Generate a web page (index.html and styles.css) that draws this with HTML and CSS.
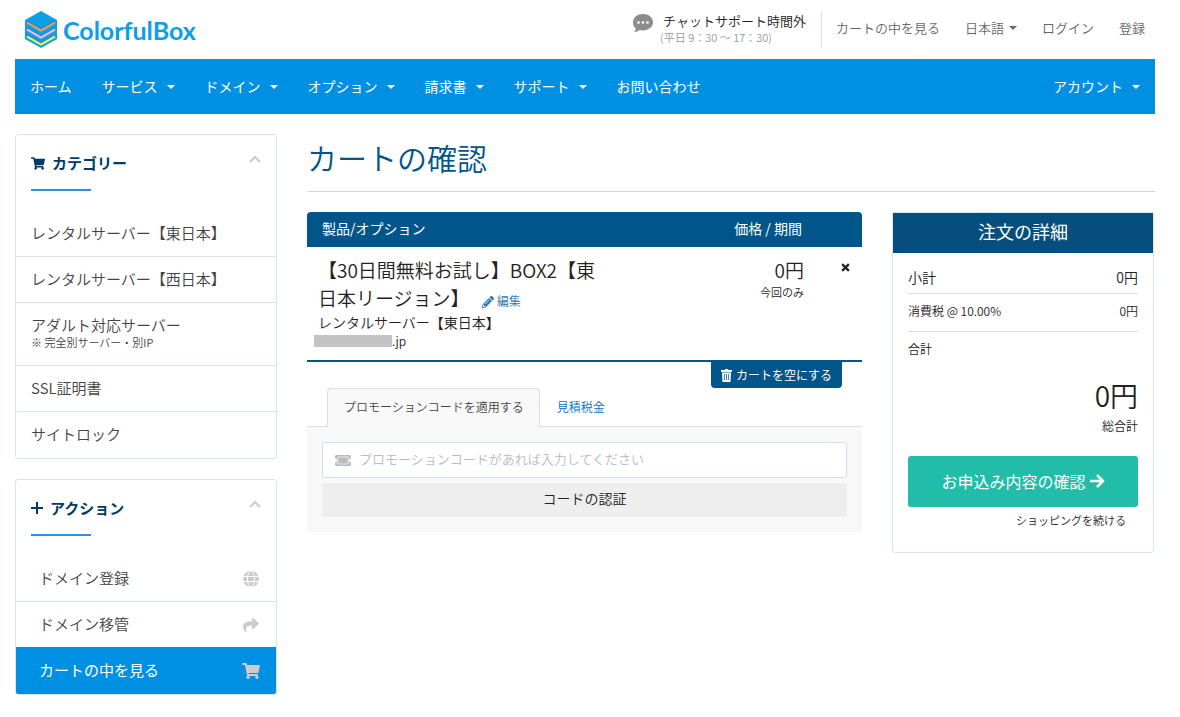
FILE: index.html
```html
<!DOCTYPE html>
<html lang="ja">
<head>
<meta charset="utf-8">
<meta name="viewport" content="width=device-width, initial-scale=1">
<title>カートの確認 - ColorfulBox</title>
<link rel="stylesheet" href="styles.css">
</head>
<body>
<svg class="sprite" aria-hidden="true">
  <symbol id="cart" viewBox="0 0 576 512"><path d="M528.12 301.319l47.273-208C578.806 78.301 567.391 64 551.99 64H159.208l-9.166-44.81C147.758 8.021 137.93 0 126.529 0H24C10.745 0 0 10.745 0 24v16c0 13.255 10.745 24 24 24h69.883l70.248 343.435C147.325 417.1 136 435.222 136 456c0 30.928 25.072 56 56 56s56-25.072 56-56c0-15.674-6.447-29.835-16.824-40h209.647C430.447 426.165 424 440.326 424 456c0 30.928 25.072 56 56 56s56-25.072 56-56c0-22.172-12.888-41.332-31.579-50.405l5.517-24.276c3.413-15.018-8.002-29.319-23.403-29.319H218.117l-6.545-32h293.145c11.206 0 20.92-7.754 23.403-18.681z"/></symbol>
  <symbol id="chevron" viewBox="0 0 12 8"><path d="M1 7l5-5 5 5" fill="none" stroke="currentColor" stroke-width="2"/></symbol>
</svg>
<div class="page">
  <header class="topbar">
    <a class="logo" href="#">
      <svg class="logo-mark" viewBox="0 0 32 37" aria-hidden="true">
        <path fill="#0aa0e6" d="M16 0l16 9v19l-16 9L0 28V9z"/>
        <path fill="none" stroke="#0878b4" stroke-width="1" d="M2 10l14 8 14-8M2 17l14 8 14-8M2 24l14 8 14-8"/>
        <path fill="none" stroke="#f0965a" stroke-width="2.200" d="M2 11.500l14 8 14-8"/>
        <path fill="none" stroke="#f4b6dc" stroke-width="2.200" d="M2 18.500l14 8 14-8"/>
        <path fill="none" stroke="#eaf060" stroke-width="2.200" d="M2 25.500l14 8 14-8"/>
      </svg>
      <span>ColorfulBox</span>
    </a>
    <div class="chat">
      <svg class="chat-icon" viewBox="0 0 20 19" aria-hidden="true"><path fill="#8c8c8c" d="M10 0c5.500 0 10 3.500 10 8.200s-4.500 8.200-10 8.200c-1.200 0-2.300-.1-3.300-.4C5.300 17.200 3.500 18 1 18c1-1 1.700-2.300 1.700-3.600C1 13 0 11 0 8.200 0 3.500 4.500 0 10 0z"/><g fill="#fff"><circle cx="5.500" cy="8.500" r="1.300"/><circle cx="10" cy="8.500" r="1.300"/><circle cx="14.500" cy="8.500" r="1.300"/></g></svg>
      <div><p class="chat-title">チャットサポート時間外</p><p class="chat-hours">(平日 9：30 〜 17：30)</p></div>
    </div>
    <nav class="toplinks">
      <a href="#">カートの中を見る</a>
      <a href="#">日本語<i class="caret"></i></a>
      <a href="#">ログイン</a>
      <a href="#">登録</a>
    </nav>
  </header>
  <nav class="mainnav">
    <a href="#">ホーム</a>
    <a href="#">サービス<i class="caret"></i></a>
    <a href="#">ドメイン<i class="caret"></i></a>
    <a href="#">オプション<i class="caret"></i></a>
    <a href="#">請求書<i class="caret"></i></a>
    <a href="#">サポート<i class="caret"></i></a>
    <a href="#">お問い合わせ</a>
    <a class="account" href="#">アカウント<i class="caret"></i></a>
  </nav>
  <div class="layout">
    <aside class="sidebar">
      <section class="panel">
        <header class="panel-head">
          <h2><svg class="head-icon" aria-hidden="true"><use href="#cart"/></svg>カテゴリー</h2>
          <button class="toggle" aria-label="カテゴリーを閉じる"><svg viewBox="0 0 12 8"><use href="#chevron"/></svg></button>
        </header>
        <ul class="links">
          <li><a href="#">レンタルサーバー【東日本】</a></li>
          <li><a href="#">レンタルサーバー【西日本】</a></li>
          <li><a href="#">アダルト対応サーバー<small>※ 完全別サーバー・別IP</small></a></li>
          <li><a href="#">SSL証明書</a></li>
          <li><a href="#">サイトロック</a></li>
        </ul>
      </section>
      <section class="panel">
        <header class="panel-head">
          <h2><svg class="plus-icon" viewBox="0 0 12 12" aria-hidden="true"><path d="M5 0h2v5h5v2H7v5H5V7H0V5h5z"/></svg>アクション</h2>
          <button class="toggle" aria-label="アクションを閉じる"><svg viewBox="0 0 12 8"><use href="#chevron"/></svg></button>
        </header>
        <ul class="links actions">
          <li><a href="#">ドメイン登録<svg class="row-icon" viewBox="0 0 16 16" aria-hidden="true"><circle cx="8" cy="8" r="8"/><g fill="none" stroke="#fff" stroke-width="1"><path d="M0 5.500h16M0 10.500h16"/><ellipse cx="8" cy="8" rx="3.500" ry="8"/></g></svg></a></li>
          <li><a href="#">ドメイン移管<svg class="row-icon" viewBox="0 0 512 512" aria-hidden="true"><path d="M503.691 189.836L327.687 37.851C312.281 24.546 288 35.347 288 56.015v80.053C127.371 137.907 0 170.100 0 322.326c0 61.441 39.581 122.309 83.333 154.132 13.653 9.931 33.111-2.533 28.077-18.631C66.066 312.814 132.917 274.316 288 272.085V360c0 20.700 24.300 31.453 39.687 18.164l176.004-152c11.071-9.562 11.086-26.753 0-36.328z"/></svg></a></li>
          <li class="active"><a href="#">カートの中を見る<svg class="row-icon" aria-hidden="true"><use href="#cart"/></svg></a></li>
        </ul>
      </section>
    </aside>
    <main class="main">
      <h1>カートの確認</h1>
      <div class="columns">
        <div class="cart">
          <table class="items">
            <thead><tr><th class="product" scope="col">製品/オプション</th><th class="price" scope="col">価格 / 期間</th><th class="remove"></th></tr></thead>
            <tbody><tr>
              <td class="product">
                <p class="name">【30日間無料お試し】BOX2【東日本リージョン】
                <a class="edit" href="#"><svg viewBox="0 0 512 512" aria-hidden="true"><path d="M498 142l-46 46c-5 5-13 5-17 0L324 77c-5-5-5-12 0-17l46-46c19-19 49-19 68 0l60 60c19 19 19 49 0 68zM284 97L22 360 0 484c-3 16 12 31 28 28l124-22 263-262c5-5 5-13 0-17L301 97c-4-5-12-5-17 0zM124 340c-5-6-5-14 0-20l154-154c6-5 14-5 20 0s5 14 0 20L144 340c-6 5-14 5-20 0zM88 424h48v36l-64 12-32-32 12-64h36z"/></svg>編集</a></p>
                <p class="group">レンタルサーバー【東日本】</p>
                <p class="domain"><span class="masked"></span>.jp</p>
              </td>
              <td class="price"><p class="amount">0円</p><p class="cycle">今回のみ</p></td>
              <td class="remove"><button aria-label="削除"><svg viewBox="0 0 8 8"><path d="M1 1l6 6M7 1L1 7" fill="none" stroke="currentColor" stroke-width="2"/></svg></button></td>
            </tr></tbody>
          </table>
          <button class="empty"><svg viewBox="0 0 11 13" aria-hidden="true"><path fill="currentColor" d="M0 1h3.500l.8-1h2.400l.8 1H11v2H0z"/><path fill="currentColor" d="M1 3.500h9L9.500 13h-8z"/><path stroke="#00558a" stroke-width=".7" d="M3.500 5v6M5.500 5v6M7.500 5v6"/></svg>カートを空にする</button>
          <div class="tabs">
            <button class="tab selected">プロモーションコードを適用する</button>
            <button class="tab">見積税金</button>
          </div>
          <form class="promo">
            <label class="field">
              <svg viewBox="0 0 16 11" aria-hidden="true"><path fill="#bbb" d="M1 0h14l1 1v2.500a2 2 0 000 4V10l-1 1H1l-1-1V7.500a2 2 0 000-4V1z"/><path fill="#bbb" stroke="#fff" stroke-width=".7" d="M2.800 2h10.400v7H2.800z"/></svg>
              <input type="text" aria-label="プロモーションコード" placeholder="プロモーションコードがあれば入力してください">
            </label>
            <button class="verify" type="button">コードの認証</button>
          </form>
        </div>
        <section class="summary">
          <h2>注文の詳細</h2>
          <div class="summary-body">
            <dl>
              <div class="line subtotal"><dt>小計</dt><dd>0円</dd></div>
              <div class="line tax"><dt>消費税 @ 10.00%</dt><dd>0円</dd></div>
              <div class="line recurring"><dt>合計</dt><dd></dd></div>
            </dl>
            <p class="total">0円</p>
            <p class="total-label">総合計</p>
            <button class="checkout">お申込み内容の確認<svg viewBox="0 0 15 14" aria-hidden="true"><path d="M0 7h13M7 1l6 6-6 6" fill="none" stroke="currentColor" stroke-width="2.500"/></svg></button>
            <a class="continue" href="#">ショッピングを続ける</a>
          </div>
        </section>
      </div>
    </main>
  </div>
</div>
</body>
</html>
```
FILE: styles.css
```css
* { box-sizing: border-box; }
body {
  margin: 0;
  background: #fff;
  color: #222;
  font-family: "Noto Sans CJK JP", sans-serif;
  font-size: 14px;
  font-weight: 350;
}
h1, h2, p, ul, dl, dd { margin: 0; padding: 0; }
ul { list-style: none; }
a { color: inherit; text-decoration: none; }
button, input { font: inherit; color: inherit; border: 0; background: none; padding: 0; margin: 0; }
button { cursor: pointer; }
svg { fill: currentColor; flex: none; }
.sprite { display: none; }
.page { padding: 0 25px 20px 15px; }
.caret {
  display: inline-block;
  border: 4px solid transparent;
  border-top-color: currentColor;
  border-bottom: 0;
}

.topbar { display: flex; align-items: center; height: 59px; }
.logo {
  display: flex;
  align-items: center;
  gap: 6px;
  margin: 0 auto 0 10px;
  color: #0aa0e6;
  font: 700 25px/36px Lato, sans-serif;
}
.logo-mark { width: 32px; height: 37px; }
.chat {
  display: flex;
  gap: 10px;
  height: 35px;
  padding-right: 15px;
  border-right: 1px solid #ddd;
}
.chat-icon { width: 20px; height: 19px; margin-top: 2px; }
.chat-title { font-size: 13px; line-height: 18px; }
.chat-hours { color: #999; font-size: 11px; line-height: 15px; margin-left: -3px; }
.toplinks {
  display: flex;
  gap: 25px;
  padding: 0 10px 4px 14px;
  color: #666;
  font-size: 13px;
  line-height: 20px;
}
.toplinks a { display: flex; align-items: center; gap: 5px; }

.mainnav { display: flex; background: #0090e3; color: #fff; font-weight: 400; line-height: 55px; }
.mainnav a { display: flex; align-items: center; gap: 9px; padding: 0 15px; }
.mainnav .account { margin-left: auto; }

.layout { display: grid; grid-template-columns: 262px minmax(0, 1fr); gap: 30px; padding-top: 20px; }
.sidebar { display: grid; gap: 20px; align-content: start; }
.panel { border: 1px solid #d8e5ef; border-radius: 3px; overflow: hidden; }
.panel-head { display: flex; justify-content: space-between; align-items: start; padding: 15px 15px 20px; }
.panel-head h2 {
  display: flex;
  align-items: center;
  gap: 7px;
  color: #003b64;
  font-size: 15px;
  font-weight: 700;
  line-height: 26px;
  flex-wrap: wrap;
}
.panel-head h2::after { content: ""; width: 60px; height: 2px; margin: 6px 150px 0 0; background: #2f8fe4; }
.head-icon { width: 14px; height: 13px; }
.plus-icon { width: 12px; height: 12px; }
.toggle { color: #ccc; line-height: 0; padding-top: 5px; }
.toggle svg { width: 12px; height: 8px; }
.links li + li { border-top: 1px solid #d8e5ef; }
.links a { display: block; padding: 9px 15px 10px; color: #444; font-size: 15px; line-height: 26px; }
.links li:last-child a { padding-bottom: 11px; }
.links small { display: block; margin: -4px 0 5px; font-size: 11px; line-height: 16px; }
.links.actions a { display: flex; justify-content: space-between; align-items: center; padding-right: 16px; padding-left: 23px; }
.row-icon { width: 18px; height: 16px; color: #ccc; margin-top: 2px; }
.links .active { border-color: #0090e3; background: #0090e3; }
.links .active a { color: #fff; font-weight: 400; }

.main h1 { color: #00558a; font-size: 30px; font-weight: 350; line-height: 46px; padding-bottom: 11px; border-bottom: 1px solid #ccd6de; }
.columns { display: grid; grid-template-columns: minmax(0, 1fr) 262px; gap: 30px; align-items: start; padding: 20px 1px 0 0; }
.items { width: 100%; table-layout: fixed; border-collapse: separate; border-spacing: 0; }
.items th { background: #00558a; color: #fff; font-weight: 400; line-height: 33px; padding: 0 0 2px; text-align: left; }
.items th:first-child { border-top-left-radius: 4px; }
.items th:last-child { border-top-right-radius: 4px; }
.items .price { text-align: right; }
.items th.product { width: 55%; padding-left: 15px; }
.items th.price { padding-right: 2px; }
.items .remove { width: 58px; }
.items td { padding: 9px 0 10px; vertical-align: top; border-bottom: 2px solid #00558a; }
.items td.product { padding-left: 11px; padding-right: 10px; }
.name, .amount { font-size: 19px; line-height: 28px; }
.edit { margin-left: 8px; color: #337ab7; font-size: 12px; line-height: 16px; }
.edit svg { width: 12px; height: 12px; margin-right: 3px; vertical-align: -2px; }
.group { line-height: 20px; }
.domain { display: flex; align-items: center; margin-left: -4px; font-size: 12px; line-height: 18px; }
.masked { width: 78px; height: 12px; background: #c3c3c3; }
.cycle { font-size: 11px; line-height: 16px; }
td.remove { text-align: center; }
td.remove button { padding: 7px 0 0 24px; line-height: 0; }
td.remove svg { width: 9px; height: 9px; }
.empty {
  display: flex;
  align-items: center;
  gap: 4px;
  margin: 0 20px 0 auto;
  padding: 0 10px;
  border-radius: 0 0 4px 4px;
  background: #00558a;
  color: #fff;
  font-size: 12px;
  font-weight: 400;
  line-height: 26px;
}
.empty svg { width: 11px; height: 13px; }
.tabs { display: flex; padding: 0 20px; border-bottom: 1px solid #ddd; }
.tab { padding: 0 15px 3px 16px; border: 1px solid transparent; border-bottom: 0; margin-bottom: -1px; color: #0073c4; font-size: 12px; line-height: 35px; }
.tab.selected { border-color: #ddd; border-radius: 4px 4px 0 0; background: #f8f8f8; color: #444; }
.promo { display: grid; gap: 5px; padding: 15px; background: #f8f8f8; }
.field { display: flex; align-items: center; gap: 8px; height: 36px; padding: 0 12px; border: 1px solid #d0e2f0; border-radius: 3px; background: #fff; }
.field svg { width: 16px; height: 11px; }
.field input { flex: 1; min-width: 0; padding-bottom: 4px; font-size: 13px; outline: 0; }
.field input::placeholder { color: #bbb; opacity: 1; }
.verify { padding-bottom: 3px; border-radius: 3px; background: #eee; line-height: 31px; }

.summary { border: 1px solid #d8e5ef; border-radius: 3px; }
.summary h2 { padding-bottom: 3px; background: #064f7d; color: #fff; font-size: 18px; font-weight: 400; line-height: 37px; text-align: center; }
.summary-body { padding: 10px 15px 22px; }
.line { display: flex; justify-content: space-between; border-bottom: 1px solid #ddd; font-size: 12px; }
.subtotal { padding-bottom: 2px; font-size: 14px; line-height: 28px; }
.tax { padding-bottom: 3px; line-height: 34px; }
.recurring { border: 0; line-height: 34px; }
.total { margin-top: 9px; padding-bottom: 2px; font-size: 28px; line-height: 40px; text-align: right; }
.total-label { font-size: 12px; line-height: 18px; text-align: right; }
.checkout {
  display: flex;
  justify-content: center;
  align-items: center;
  gap: 4px;
  width: 100%;
  margin: 21px 0 4px;
  padding-bottom: 1px;
  border-radius: 3px;
  background: #22bda8;
  color: #fff;
  font-size: 16px;
  font-weight: 400;
  line-height: 50px;
}
.checkout svg { width: 15px; height: 14px; }
.continue { display: block; padding: 0 12px 1px 0; font-size: 11px; line-height: 18px; text-align: right; }
```
